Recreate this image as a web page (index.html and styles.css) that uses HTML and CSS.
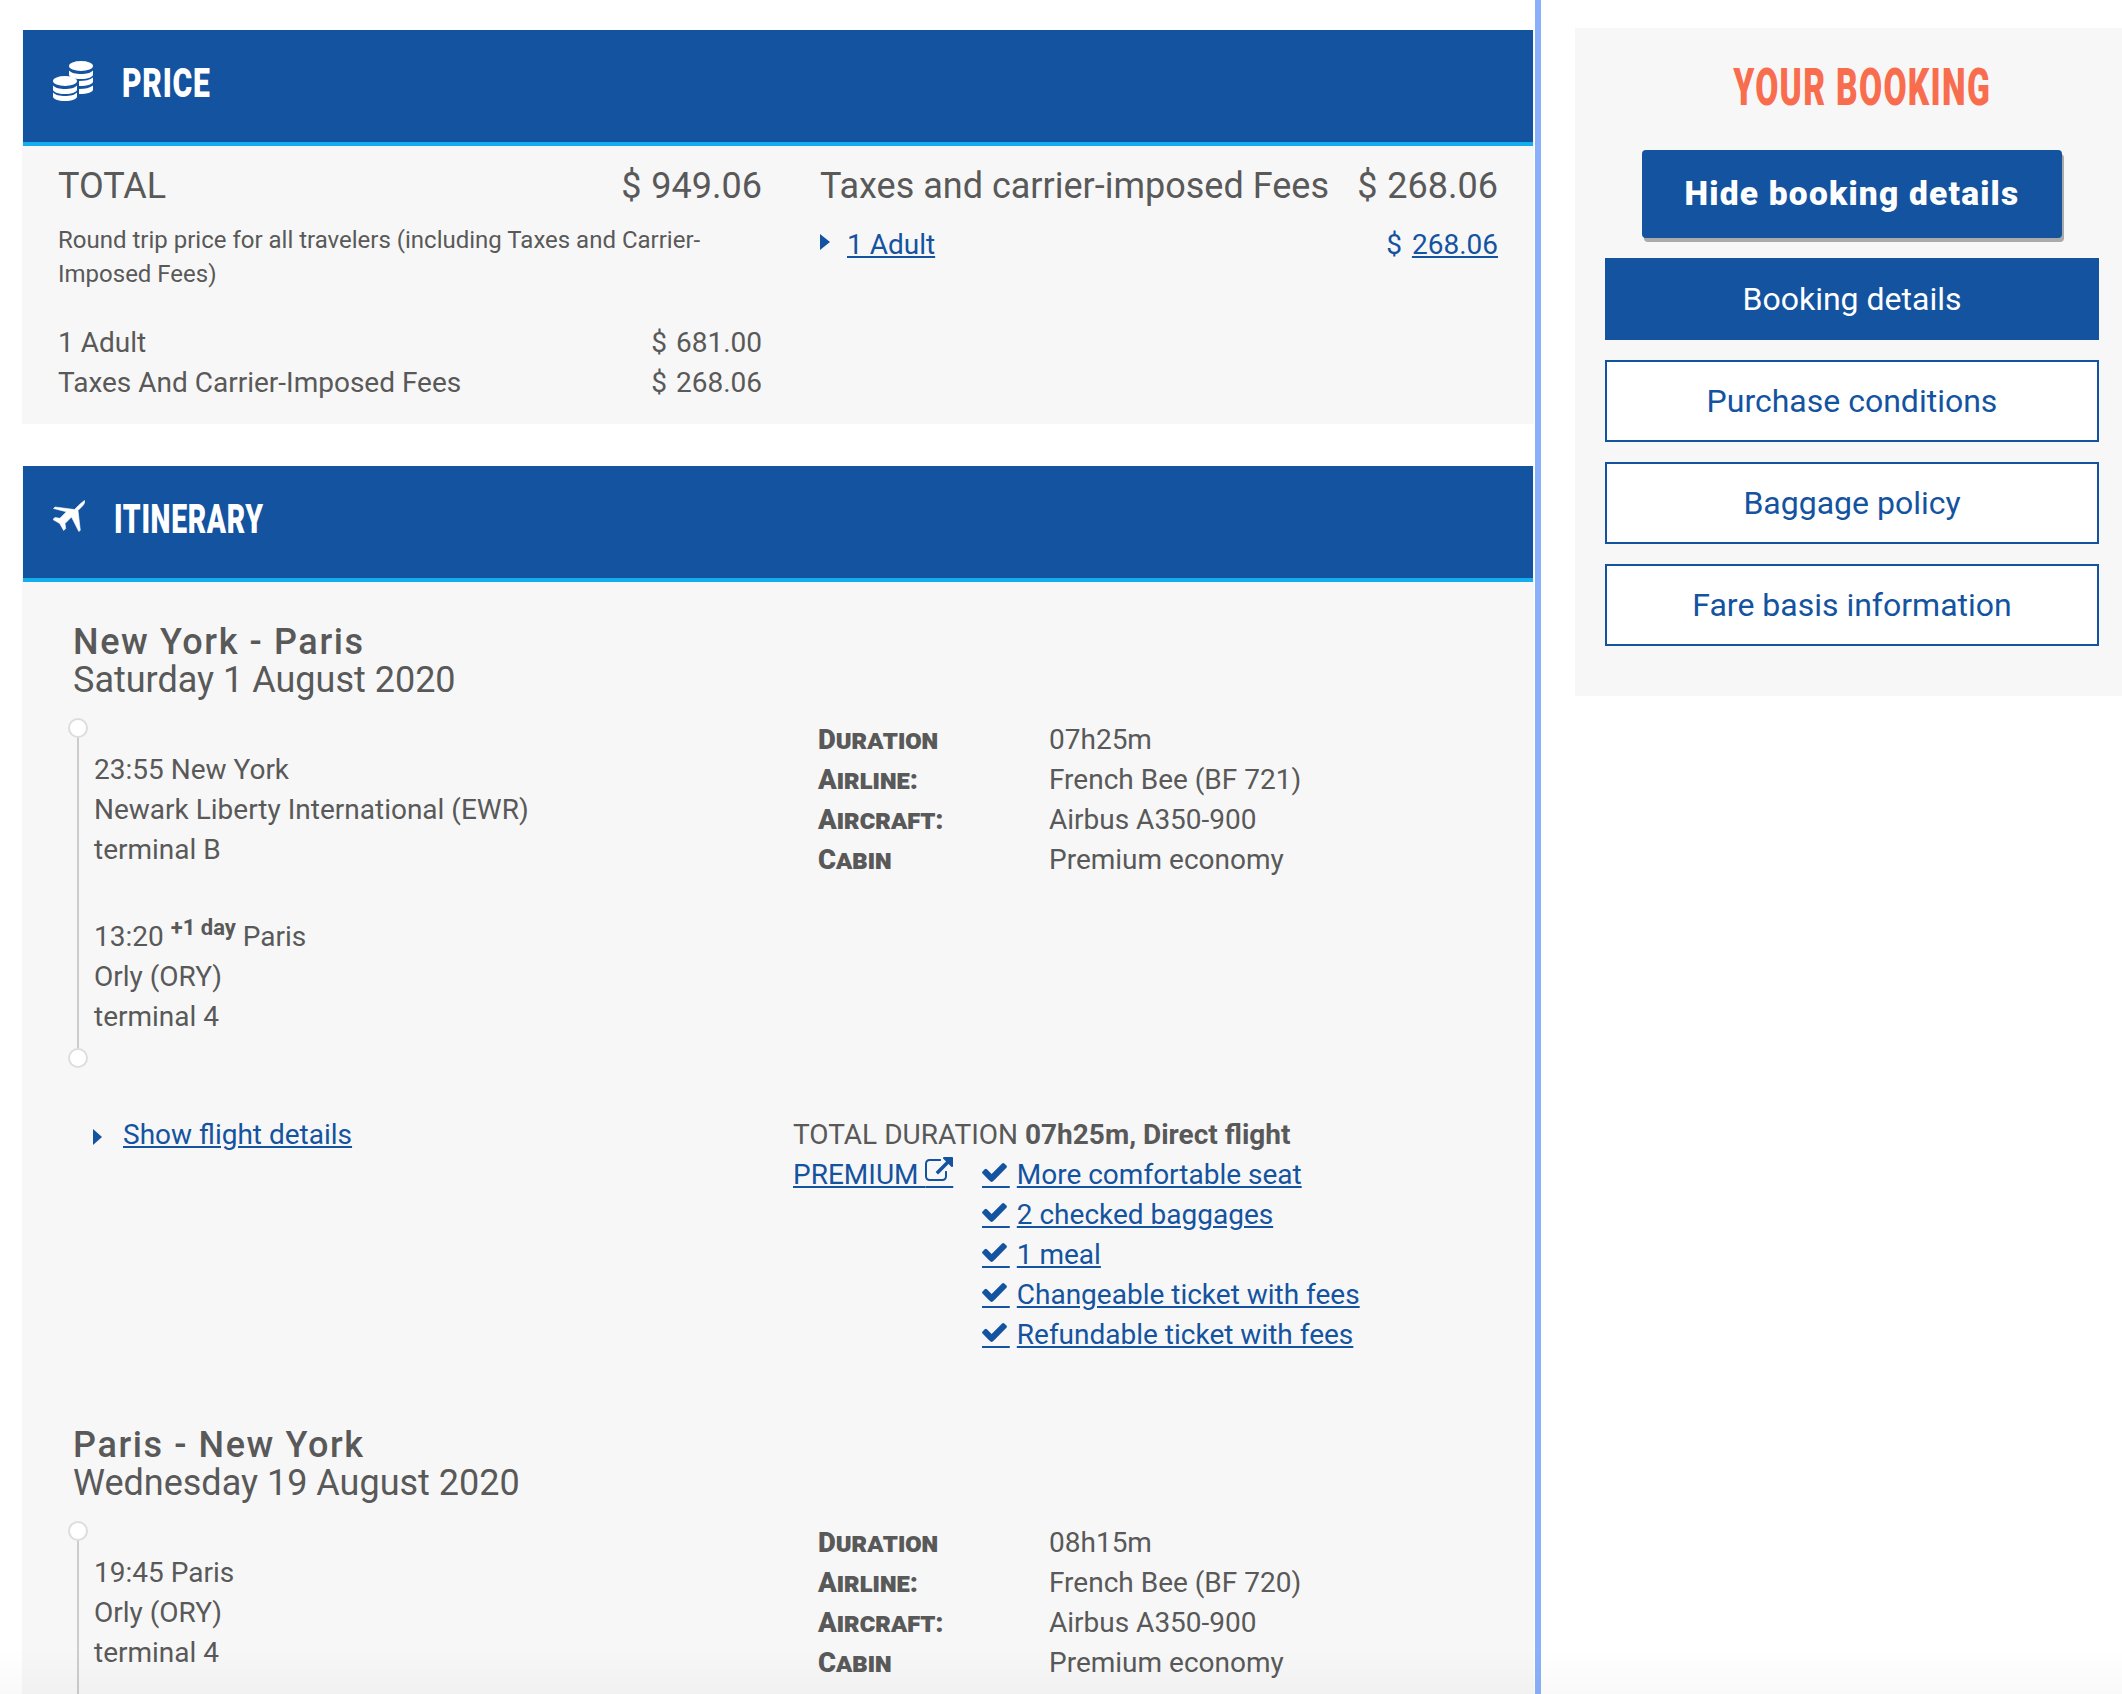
FILE: index.html
```html
<!DOCTYPE html>
<html lang="en">
<head>
<meta charset="utf-8">
<title>Booking</title>
<link rel="stylesheet" href="styles.css">
</head>
<body>
<div class="page">
  <main class="main">
    <section class="panel">
      <header class="band">
        <svg class="coins" viewBox="0 0 40 40"><g fill="#fff"><ellipse cx="28" cy="5" rx="12" ry="5"/><path d="M16 9.500c2 2.500 7 3.500 12 3.500s10-1 12-3.500v4c0 2.500-5 4.500-12 4.500s-12-2-12-4.500z"/><path d="M26 20c6 0 11-1 14-3.500v4c0 2.500-5 4.500-14 4.500z"/><path d="M26 28c6 0 11-1 14-3.500v4c0 2.500-5 4.500-14 4.500z"/><ellipse cx="12" cy="20" rx="12" ry="5"/><path d="M0 24.500c2 2.500 7 3.500 12 3.500s10-1 12-3.500v4c0 2.500-5 4.500-12 4.500s-12-2-12-4.500z"/><path d="M0 31.500c2 2.500 7 3.500 12 3.500s10-1 12-3.500v4c0 2.500-5 4.500-12 4.500s-12-2-12-4.500z"/></g></svg>
        <h2 class="band-title"><span>PRICE</span></h2>
      </header>
      <div class="price-body">
        <div class="price-col price-left">
          <div class="row big"><span>TOTAL</span><span class="amt">$ 949.06</span></div>
          <p class="note">Round trip price for all travelers (including Taxes and Carrier-Imposed Fees)</p>
          <div class="row"><span>1 Adult</span><span class="amt">$ 681.00</span></div>
          <div class="row"><span>Taxes And Carrier-Imposed Fees</span><span class="amt">$ 268.06</span></div>
        </div>
        <div class="price-col price-right">
          <div class="row big"><span>Taxes and carrier-imposed Fees</span><span class="amt">$ 268.06</span></div>
          <div class="row row-link"><span><i class="tri"></i><a href="#">1 Adult</a></span><span class="blue amt">$ <a href="#">268.06</a></span></div>
        </div>
      </div>
    </section>

    <section class="panel">
      <header class="band">
        <svg class="plane" viewBox="0 0 32 32"><path fill="#fff" stroke="#fff" stroke-width=".6" stroke-linejoin="round" d="M31.500 .5c.8 1.500-.5 4-2.500 6l-4 4 2.300 19.800-1.500 1.200-7.300-14.500-6.500 6.500.7 5-2 2-4-7-6.800-4 2-2 5 .8 6.500-6.500L.5 8.500l1.500-1.500 19.500 2.500 4-4c2-2 4.500-4 6-5z"/></svg>
        <h2 class="band-title band-title-short"><span>ITINERARY</span></h2>
      </header>
      <div class="itin-body">
        <article class="leg">
          <h3 class="route">New York - Paris</h3>
          <p class="date">Saturday 1 August 2020</p>
          <div class="leg-main">
            <div class="timeline">
              <div class="stop"><p>23:55 New York</p><p>Newark Liberty International (EWR)</p><p>terminal B</p></div>
              <div class="stop"><p>13:20 <sup class="plus">+1 day</sup> Paris</p><p>Orly (ORY)</p><p>terminal 4</p></div>
            </div>
            <dl class="facts">
              <div class="fact"><dt>Duration</dt><dd>07h25m</dd></div>
              <div class="fact"><dt>Airline:</dt><dd>French Bee (BF 721)</dd></div>
              <div class="fact"><dt>Aircraft:</dt><dd>Airbus A350-900</dd></div>
              <div class="fact"><dt>Cabin</dt><dd>Premium economy</dd></div>
            </dl>
          </div>
          <div class="leg-foot">
            <div class="show"><i class="tri tri-low"></i><a href="#">Show flight details</a></div>
            <div class="summary">
              <p>TOTAL DURATION <b>07h25m, Direct flight</b></p>
              <div class="fare">
                <a class="premium" href="#">PREMIUM <span class="ext">&nbsp;&nbsp;&nbsp;&nbsp;<svg viewBox="0 0 1792 1536"><path fill="#14539f" d="M1408 928v320q0 119-84.500 203.500t-203.500 84.500h-832q-119 0-203.500-84.500t-84.500-203.500v-832q0-119 84.500-203.500t203.500-84.500h704q14 0 23 9t9 23v64q0 14-9 23t-23 9h-704q-66 0-113 47t-47 113v832q0 66 47 113t113 47h832q66 0 113-47t47-113v-320q0-14 9-23t23-9h64q14 0 23 9t9 23zm384-864v512q0 26-19 45t-45 19-45-19l-176-176-652 652q-10 10-23 10t-23-10l-114-114q-10-10-10-23t10-23l652-652-176-176q-19-19-19-45t19-45 45-19h512q26 0 45 19t19 45z"/></svg></span></a>
                <ul class="perks">
                  <li><a class="chk" href="#">&nbsp;&nbsp;&nbsp;&nbsp;<svg viewBox="121 334 1550 1188"><path fill="#14539f" d="M1671 566q0 40-28 68l-724 724-136 136q-28 28-68 28t-68-28l-136-136-362-362q-28-28-28-68t28-68l136-136q28-28 68-28t68 28l294 295 656-657q28-28 68-28t68 28l136 136q28 28 28 68z"/></svg></a><a href="#">More comfortable seat</a></li>
                  <li><a class="chk" href="#">&nbsp;&nbsp;&nbsp;&nbsp;<svg viewBox="121 334 1550 1188"><path fill="#14539f" d="M1671 566q0 40-28 68l-724 724-136 136q-28 28-68 28t-68-28l-136-136-362-362q-28-28-28-68t28-68l136-136q28-28 68-28t68 28l294 295 656-657q28-28 68-28t68 28l136 136q28 28 28 68z"/></svg></a><a href="#">2 checked baggages</a></li>
                  <li><a class="chk" href="#">&nbsp;&nbsp;&nbsp;&nbsp;<svg viewBox="121 334 1550 1188"><path fill="#14539f" d="M1671 566q0 40-28 68l-724 724-136 136q-28 28-68 28t-68-28l-136-136-362-362q-28-28-28-68t28-68l136-136q28-28 68-28t68 28l294 295 656-657q28-28 68-28t68 28l136 136q28 28 28 68z"/></svg></a><a href="#">1 meal</a></li>
                  <li><a class="chk" href="#">&nbsp;&nbsp;&nbsp;&nbsp;<svg viewBox="121 334 1550 1188"><path fill="#14539f" d="M1671 566q0 40-28 68l-724 724-136 136q-28 28-68 28t-68-28l-136-136-362-362q-28-28-28-68t28-68l136-136q28-28 68-28t68 28l294 295 656-657q28-28 68-28t68 28l136 136q28 28 28 68z"/></svg></a><a href="#">Changeable ticket with fees</a></li>
                  <li><a class="chk" href="#">&nbsp;&nbsp;&nbsp;&nbsp;<svg viewBox="121 334 1550 1188"><path fill="#14539f" d="M1671 566q0 40-28 68l-724 724-136 136q-28 28-68 28t-68-28l-136-136-362-362q-28-28-28-68t28-68l136-136q28-28 68-28t68 28l294 295 656-657q28-28 68-28t68 28l136 136q28 28 28 68z"/></svg></a><a href="#">Refundable ticket with fees</a></li>
                </ul>
              </div>
            </div>
          </div>
        </article>
        <article class="leg">
          <h3 class="route">Paris - New York</h3>
          <p class="date">Wednesday 19 August 2020</p>
          <div class="leg-main">
            <div class="timeline">
              <div class="stop"><p>19:45 Paris</p><p>Orly (ORY)</p><p>terminal 4</p></div>
              <div class="stop"><p>&nbsp;</p><p>&nbsp;</p><p>&nbsp;</p></div>
            </div>
            <dl class="facts">
              <div class="fact"><dt>Duration</dt><dd>08h15m</dd></div>
              <div class="fact"><dt>Airline:</dt><dd>French Bee (BF 720)</dd></div>
              <div class="fact"><dt>Aircraft:</dt><dd>Airbus A350-900</dd></div>
              <div class="fact"><dt>Cabin</dt><dd>Premium economy</dd></div>
            </dl>
          </div>
        </article>
      </div>
    </section>
  </main>
  <aside class="side">
    <h2 class="side-title"><span>YOUR BOOKING</span></h2>
    <button class="hide-btn" type="button">Hide booking details</button>
    <nav class="tabs">
      <a class="tab tab-on" href="#">Booking details</a>
      <a class="tab" href="#">Purchase conditions</a>
      <a class="tab" href="#">Baggage policy</a>
      <a class="tab" href="#">Fare basis information</a>
    </nav>
  </aside>
</div>
</body>
</html>
```
FILE: styles.css
```css
*, *::before, *::after { box-sizing: border-box; }
html, body { margin: 0; padding: 0; height: 100%; background: #fff; }
body { font-family: Roboto, "Liberation Sans", sans-serif; font-size: 28px; line-height: 40px; color: #595959; overflow: hidden; }
p, h2, h3, dl, dd, ul { margin: 0; padding: 0; }
a { color: #14539f; text-decoration: underline; }
.page { display: flex; height: 1694px; overflow: hidden; position: relative; }
.page::after { content: ""; position: absolute; left: 0; right: 0; bottom: 0; height: 46px; background: linear-gradient(rgba(0,0,0,0), rgba(0,0,0,.022)); pointer-events: none; }
.main { width: 1541px; flex: none; padding: 30px 1px 0 22px; border-right: 6px solid #8ab0fb; }
.panel { background: #f7f7f7; margin-bottom: 42px; }
.band { margin: 0 1px; height: 116px; background: #14539f; border-bottom: 4px solid #14aeef; position: relative; }
.band-title { font-family: Roboto, "Liberation Sans", sans-serif; font-weight: 900; font-size: 41px; line-height: 48px; color: #fff; padding: 29px 0 0 99px; }
.band-title-short { padding-left: 91px; }
.band-title span { display: inline-block; transform: scaleX(.733); transform-origin: left center; letter-spacing: 1px; }
.band-title-short span { transform: scaleX(.69); }
.coins { position: absolute; left: 30px; top: 31px; width: 40px; height: 40px; }
.plane { position: absolute; left: 30px; top: 34px; width: 32px; height: 32px; }
.price-body { display: flex; height: 278px; padding: 15px 36px 0; gap: 58px; }
.price-col { flex: none; }
.price-left { width: 704px; }
.price-right { width: 678px; }
.row { display: flex; justify-content: space-between; }
.row.big { font-size: 36px; line-height: 50px; }
.amt { word-spacing: 2px; }
.row.big .amt { word-spacing: 1px; }
.note { font-size: 24px; line-height: 34px; margin: 12px 0 32px; }
.row-link { margin-top: 14px; }
.blue { color: #14539f; }
.blue.amt { word-spacing: 3px; }
.tri { display: inline-block; border-left: 10px solid #14539f; border-top: 8px solid transparent; border-bottom: 8px solid transparent; margin-right: 17px; vertical-align: 4px; }
.tri-low { margin-right: 21px; vertical-align: -1px; border-left-width: 9px; }
.itin-body { padding: 0 0 0 51px; height: 1112px; overflow: hidden; }
.leg { padding-top: 41px; }
.leg + .leg { padding-top: 1px; }
.route { font-size: 36px; line-height: 38px; font-weight: 500; letter-spacing: 1.6px; }
.date { font-size: 36px; line-height: 39px; }
.leg-main { display: flex; margin-top: 18px; }
.timeline { width: 745px; flex: none; padding: 32px 0 31px 21px; position: relative; }
.timeline::before { content: ""; position: absolute; left: 4px; top: 10px; bottom: 10px; width: 2px; background: #ccc; }
.timeline::after, .stop:first-child::before { content: ""; position: absolute; left: -5px; width: 20px; height: 20px; border-radius: 50%; background: #fff; border: 2px solid #ddd; }
.timeline::after { bottom: 0; }
.stop:first-child::before { top: 0; }
.stop + .stop { margin-top: 47px; }
.plus { font-size: 22px; font-weight: 700; line-height: 0; vertical-align: 11px; }
.facts { padding-top: 2px; }
.fact { display: flex; }
.fact dt { width: 231px; font-weight: 900; font-size: 27.5px; font-variant: small-caps; }
.leg-foot { display: flex; margin-top: 47px; height: 310px; }
.show { width: 720px; flex: none; padding-left: 20px; }
.summary b { font-weight: 700; }
.fare { display: flex; }
.premium { width: 189px; flex: none; height: 40px; }
.ext, .chk { position: relative; }
.ext svg { position: absolute; left: 0; top: -1px; width: 28px; height: 24px; }
.perks { list-style: none; }
.chk { margin-right: 7px; }
.chk svg { position: absolute; left: 0; top: 5px; width: 25px; height: 19px; }
.side { flex: 1; margin: 28px 0 0 34px; height: 668px; background: #f7f7f7; padding: 32px 23px 0 30px; }
.side-title { font-family: Roboto, "Liberation Sans", sans-serif; font-weight: 900; font-size: 51px; line-height: 56px; color: #f96d4f; text-align: center; margin-left: 20px; }
.side-title span { display: inline-block; transform: scaleX(.657); transform-origin: center; letter-spacing: 2px; }
.hide-btn { display: block; margin: 34px 0 20px 37px; width: 420px; height: 88px; border: 0; border-radius: 4px; background: #14539f; color: #fff; font: 900 33.5px Roboto, sans-serif; letter-spacing: 1.2px; box-shadow: 2px 4px 0 #aaa; padding: 0 0 2px; }
.tabs { display: flex; flex-direction: column; gap: 20px; }
.tab { display: flex; align-items: center; justify-content: center; height: 82px; border: 2px solid #14539f; background: #fff; color: #14539f; text-decoration: none; font-size: 32px; padding-bottom: 1px; }
.tab-on { background: #14539f; color: #fff; }
```
